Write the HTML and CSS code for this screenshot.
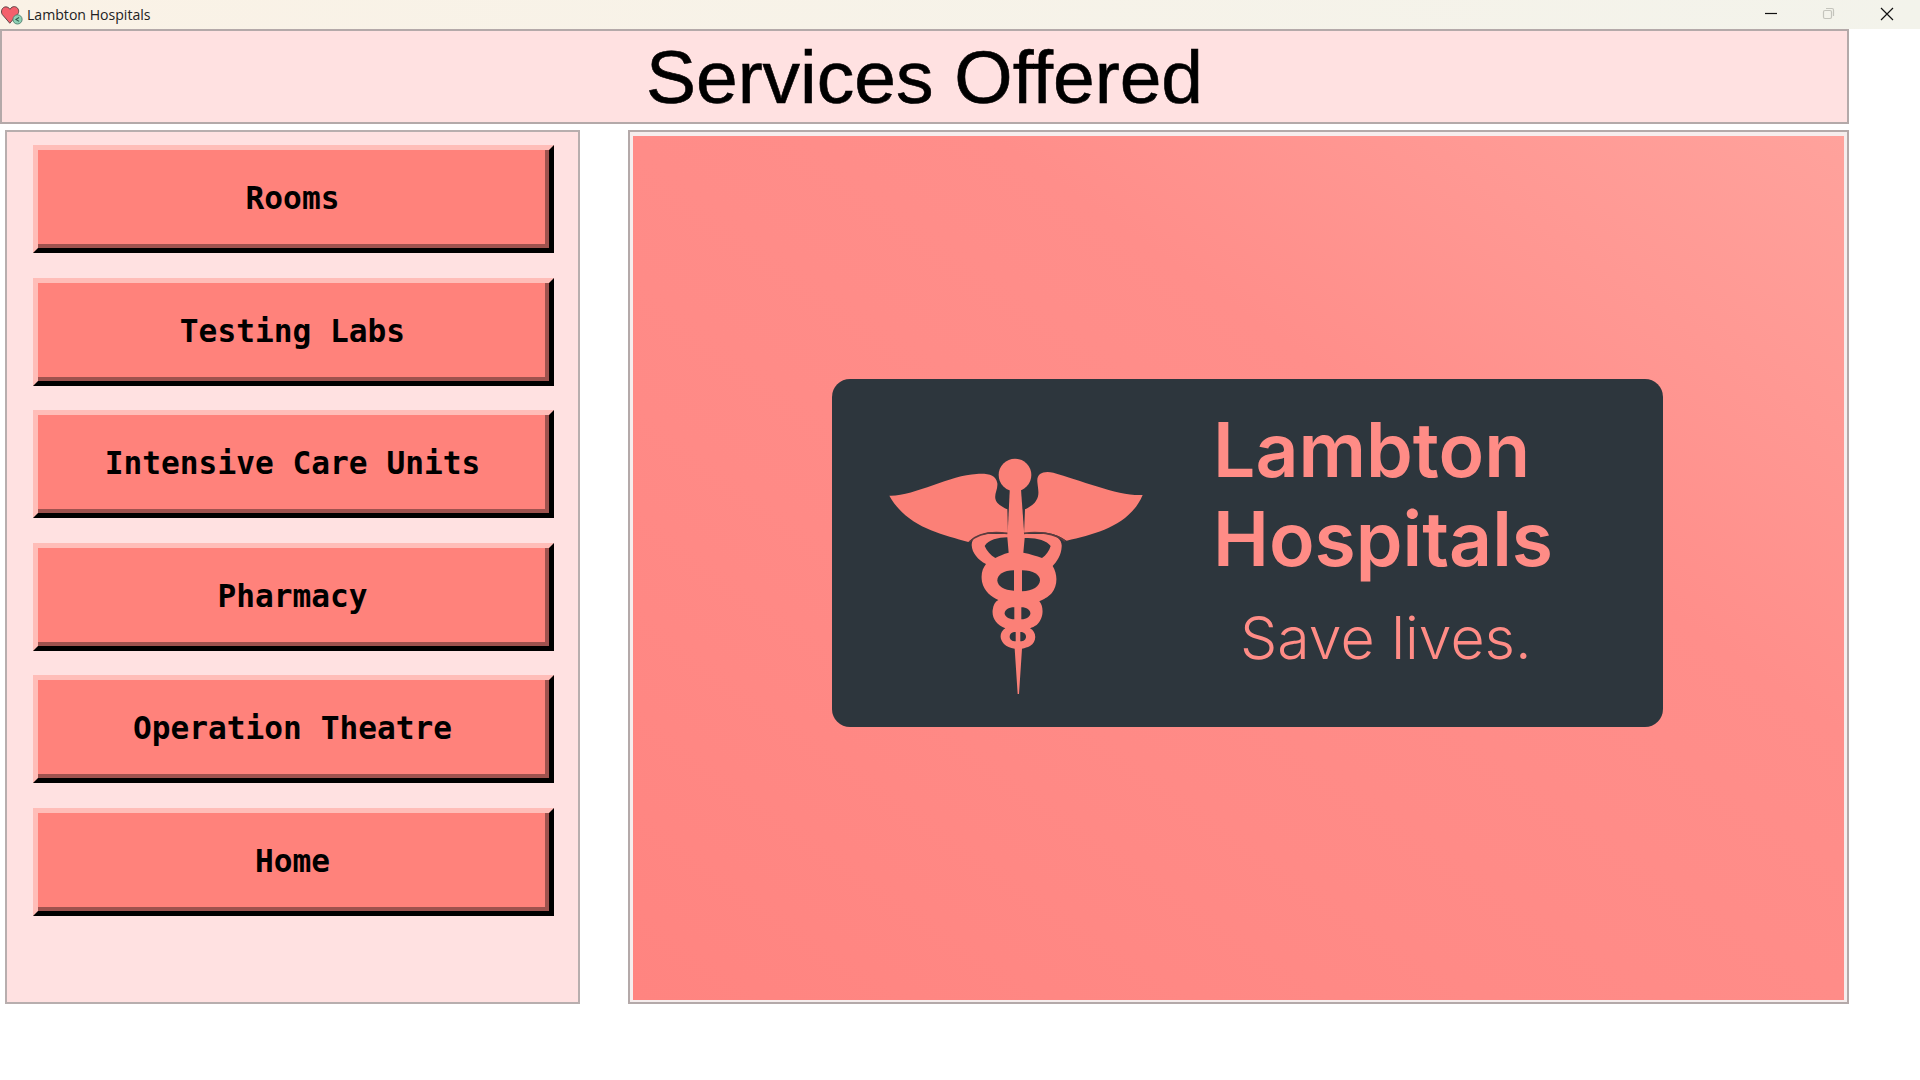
FILE: index.html
```html
<!DOCTYPE html>
<html lang="en">

<head>
    <meta charset="UTF-8">
    <meta name="viewport" content="width=device-width, initial-scale=1.0">
    <title>Lambton Hospitals</title>
    <link rel="stylesheet" href="styles.css">
</head>

<body>
    <div class="titlebar">
        <svg class="app-icon" viewBox="0 0 20 18">
            <path d="M8 16.5 L1.2 8.6 C-0.6 5.8 1 1.6 4.4 1.6 C6 1.6 7.2 2.4 8.2 3.8 C9.2 2.2 10.6 1.2 12.4 1.4 C15.6 1.8 16.8 5 15.6 7.6 Z" fill="#f4606c" stroke="#4a3a3a" stroke-width="0.8"/>
            <circle cx="15" cy="13" r="4.2" fill="#8ed0b4" stroke="#4d7c6c" stroke-width="0.8"/>
            <path d="M16.4 11.2 L13.6 13 L16.4 14.8" fill="none" stroke="#2f5a4c" stroke-width="1"/>
        </svg>
        <span class="app-name">Lambton Hospitals</span>
        <div class="window-buttons">
            <svg class="win-btn" viewBox="0 0 58 29"><path d="M23 13.5 H35" stroke="#111" stroke-width="1.2"/></svg>
            <svg class="win-btn" viewBox="0 0 58 29"><rect x="23.5" y="10.5" width="8" height="8" rx="1.5" fill="none" stroke="#c4c4bc" stroke-width="1.2"/><path d="M26 8.5 H32 Q33.5 8.5 33.5 10 V16" fill="none" stroke="#c4c4bc" stroke-width="1.2"/></svg>
            <svg class="win-btn" viewBox="0 0 58 29"><path d="M23 8 L35 20 M35 8 L23 20" stroke="#111" stroke-width="1.2"/></svg>
        </div>
    </div>

    <div class="heading">
        <h1>Services Offered</h1>
    </div>

    <div class="main">
        <div class="menu">
            <button class="menu-button" type="button"><span>Rooms</span></button>
            <button class="menu-button" type="button"><span>Testing Labs</span></button>
            <button class="menu-button" type="button"><span>Intensive Care Units</span></button>
            <button class="menu-button" type="button"><span>Pharmacy</span></button>
            <button class="menu-button" type="button"><span>Operation Theatre</span></button>
            <button class="menu-button" type="button"><span>Home</span></button>
        </div>

        <div class="picture">
            <div class="picture-fill">
                <div class="logo">
                    <!-- caduceus, coordinates taken at 3x -->
                    <svg class="logo-mark" viewBox="0 0 900 870">
                        <g fill="#fb8077">
                            <circle cx="465" cy="135" r="49"/>
                            <path d="M88 197 C160 200 270 135 350 132 C385 130 408 135 412 160 C414 180 400 195 408 212 C415 226 432 232 442 238 L444 312 C410 300 360 305 325 336 C240 312 140 290 88 197 Z"/>
                            <path d="M848 195 C780 200 660 150 580 128 C550 122 530 130 532 155 C534 178 540 195 528 212 C520 226 505 232 495 238 L492 312 C530 300 580 305 620 332 C710 312 810 285 848 195 Z"/>
                            <path d="M450 165 H482 L494 330 H442 Z"/>
                            <path d="M335 345 C335 325 350 315 380 312 H560 C590 315 607 330 605 350 C604 375 590 395 578 408 C592 430 595 465 575 490 C562 503 552 508 538 514 C552 530 552 565 530 585 C522 590 518 592 510 595 C530 605 532 635 510 648 C502 652 495 654 486 656 L477 792 H473 L464 656 C450 654 440 650 432 642 C416 625 420 605 436 595 C410 585 395 565 398 540 C400 525 405 515 415 510 C395 500 372 485 366 455 C362 430 368 415 378 402 C355 390 336 370 335 345 Z"/>
                        </g>
                        <g fill="#2d363d">
                            <path d="M374 348 C385 330 415 322 442 322 L446 368 C430 372 418 378 406 384 C392 376 380 362 374 348 Z"/>
                            <path d="M572 348 C560 330 525 322 494 324 L490 368 C510 372 530 378 546 384 C558 376 568 362 572 348 Z"/>
                            <path d="M462 421 C430 421 412 435 412 451 C412 468 432 482 462 482 Z"/>
                            <path d="M486 421 C520 421 540 435 540 451 C540 468 518 484 486 484 Z"/>
                            <path d="M463 532 C445 532 434 540 434 550 C434 560 446 568 463 568 Z"/>
                            <path d="M484 532 C500 532 511 540 511 550 C511 560 500 568 484 568 Z"/>
                            <path d="M467 606 C455 606 449 612 449 620 C449 628 456 634 467 634 Z"/>
                            <path d="M481 606 C491 606 498 612 498 620 C498 628 491 634 481 634 Z"/>
                        </g>
                        <path d="M328 336 C350 312 392 304 442 310 M492 310 C530 304 585 308 616 334" fill="none" stroke="#5c3c3e" stroke-width="5"/>
                    </svg>
                    <div class="logo-text">
                        <div class="logo-name">Lambton<br>Hospitals</div>
                        <div class="logo-tag">Save lives.</div>
                    </div>
                </div>
            </div>
        </div>
    </div>
</body>

</html>
```

FILE: styles.css
```css
body {
    margin: 0;
    background: #fff;
    overflow: hidden;
}

.titlebar {
    display: flex;
    align-items: center;
    height: 29px;
    background: linear-gradient(to right, #faf2e6, #f3f3eb);
}

.app-icon {
    width: 22px;
    height: 20px;
    margin-left: 1px;
}

.app-name {
    margin-left: 4px;
    font-family: "Open Sans", sans-serif;
    font-size: 14.1px;
    color: #222;
}

.window-buttons {
    display: flex;
    margin-left: auto;
    margin-right: 4px;
}

.win-btn {
    width: 58px;
    height: 29px;
}

.heading {
    width: 1849px;
    height: 95px;
    box-sizing: border-box;
    border: 2px solid #b4a9a9;
    background: #ffe1e1;
    display: flex;
    align-items: center;
    justify-content: center;
}

h1 {
    margin: 0;
    font-family: "Liberation Sans", Arial, sans-serif;
    font-size: 75px;
    font-weight: normal;
    color: #000;
    -webkit-text-stroke: 0.6px #000;
}

.main {
    display: flex;
    gap: 48px;
    margin: 6px 0 0 5px;
    width: 1844px;
    height: 874px;
}

.menu {
    width: 575px;
    box-sizing: border-box;
    border: 2px solid #b8aeae;
    background: #ffe1e1;
    display: flex;
    flex-direction: column;
    align-items: flex-start;
    gap: 24.5px;
    padding: 13px 0 0 26px;
}

.menu-button {
    display: block;
    width: 521px;
    height: 108px;
    padding: 0;
    box-sizing: border-box;
    border-style: solid;
    border-width: 5px;
    border-color: #ffbdb8 #000 #000 #ffbdb8;
    background: #ff827b;
    cursor: pointer;
}

.menu-button span {
    display: flex;
    align-items: center;
    justify-content: center;
    height: 100%;
    box-sizing: border-box;
    padding: 2px 0 0 2px;
    border-right: 4px solid #9e524e;
    border-bottom: 4px solid #9e524e;
    font-family: "DejaVu Sans Mono", monospace;
    font-size: 31.2px;
    font-weight: bold;
    color: #000;
}

.picture {
    flex: 1;
    box-sizing: border-box;
    border: 2px solid #b4a9a9;
    background: #f6eded;
    padding: 4px 3px 2px;
}

.picture-fill {
    height: 100%;
    background: linear-gradient(215deg, #ffa29c 0%, #ff8e8a 35%, #ff8a86 65%, #ff8480 100%);
    display: flex;
    align-items: flex-start;
}

.logo {
    display: flex;
    width: 831px;
    height: 348px;
    margin: 243px 0 0 199px;
    box-sizing: border-box;
    padding: 51px 0 0 28px;
    border-radius: 18px;
    background: #2d363d;
}

.logo-mark {
    width: 300px;
    height: 290px;
    flex: none;
}

.logo-text {
    margin: -25px 0 0 53px;
    font-family: Inter, sans-serif;
    color: #ff8c86;
}

.logo-name {
    font-size: 75px;
    font-weight: 600;
    line-height: 89px;
}

.logo-tag {
    margin: 20px 0 0 27px;
    font-size: 59px;
    font-weight: 300;
    line-height: 70px;
}
```
